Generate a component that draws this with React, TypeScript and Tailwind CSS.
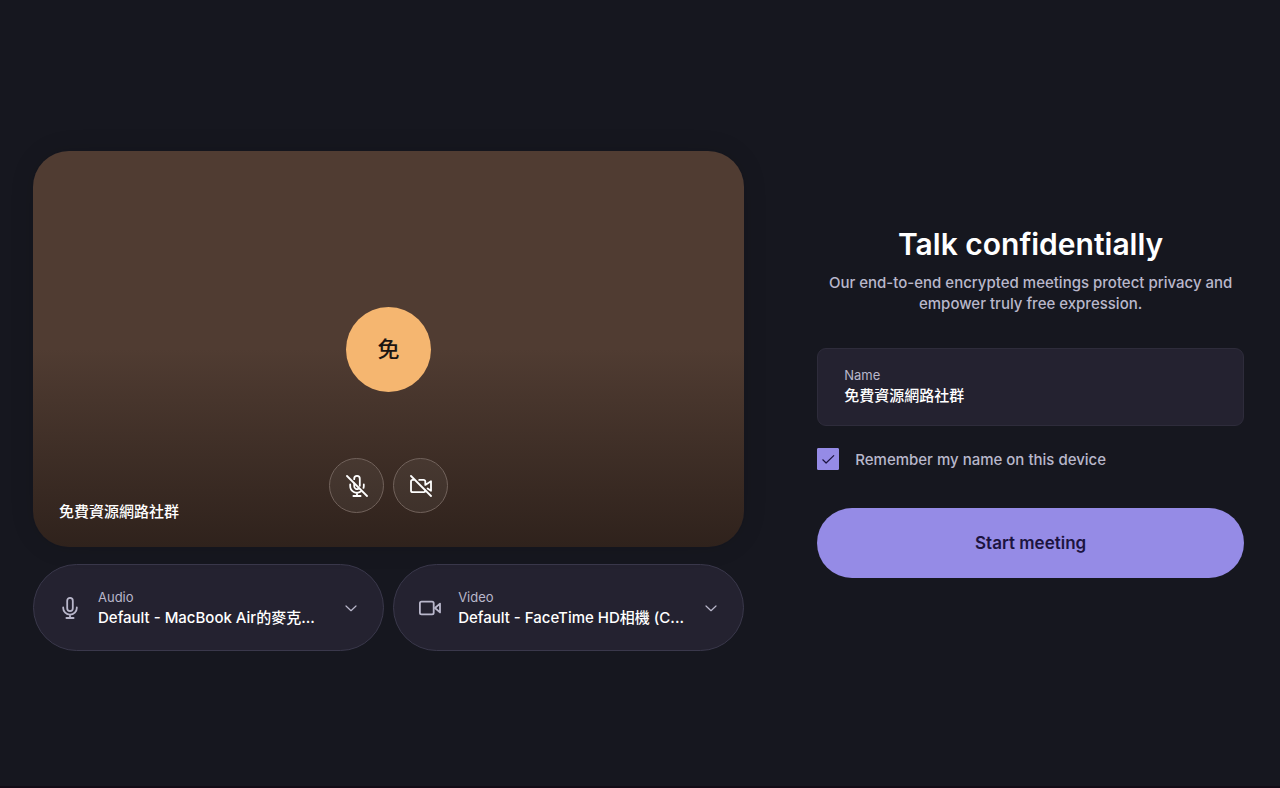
import { useState } from 'react';
import type { ReactNode } from 'react';
import { clsx } from 'clsx';

const USER_NAME = '免費資源網路社群';

export default function App() {
  return (
    <main className="min-h-screen border-b-2 border-[#120c16] bg-[#16171f] pt-4 pr-9 pl-[33px] font-['Inter','Noto_Sans_CJK_TC',sans-serif] text-white grid grid-cols-[5fr_3fr] items-center gap-[73px]">
      <section className="min-w-0">
        <VideoPreview />
        <div className="mt-[17px] grid grid-cols-2 gap-[9px]">
          <DeviceSelect
            id="audio-device"
            label="Audio"
            value="Default - MacBook Air的麥克..."
            icon={<MicIcon />}
          />
          <DeviceSelect
            id="video-device"
            label="Video"
            value="Default - FaceTime HD相機 (C..."
            icon={<CameraIcon />}
          />
        </div>
      </section>
      <JoinForm />
    </main>
  );
}

function VideoPreview() {
  const [isMuted, setIsMuted] = useState<boolean>(true);
  const [isCameraOff, setIsCameraOff] = useState<boolean>(true);

  return (
    <div className="relative flex aspect-[711/396] items-center justify-center rounded-[36px] bg-linear-to-b from-[#503c32] from-50% to-[#2f221c] shadow-[0_0_24px_rgba(0,0,0,0.12)]">
      <div className="flex size-[85px] items-center justify-center rounded-full bg-[#f5b670] text-[22px] font-medium text-[#1c1512]">
        免
      </div>
      <span className="absolute bottom-[23px] left-[26px] text-[15px] leading-6 font-medium">
        {USER_NAME}
      </span>
      <div className="absolute inset-x-0 bottom-[34px] flex justify-center gap-[9px]">
        <RoundButton
          label="Microphone"
          isOff={isMuted}
          onClick={() => setIsMuted(!isMuted)}>
          {isMuted ? <MicOffIcon /> : <MicIcon />}
        </RoundButton>
        <RoundButton
          label="Camera"
          isOff={isCameraOff}
          onClick={() => setIsCameraOff(!isCameraOff)}>
          {isCameraOff ? <CameraOffIcon /> : <CameraIcon />}
        </RoundButton>
      </div>
    </div>
  );
}

function RoundButton({
  label,
  isOff,
  onClick,
  children,
}: {
  label: string;
  isOff: boolean;
  onClick: () => void;
  children: ReactNode;
}) {
  return (
    <button
      type="button"
      aria-label={label}
      aria-pressed={!isOff}
      className={clsx(
        'flex size-[55px] cursor-pointer items-center justify-center rounded-full border border-[#71625b]',
        isOff ? 'bg-white/5' : 'bg-white/20',
      )}
      onClick={onClick}>
      {children}
    </button>
  );
}

function DeviceSelect({
  id,
  label,
  value,
  icon,
}: {
  id: string;
  label: string;
  value: string;
  icon: ReactNode;
}) {
  return (
    <div className="flex h-[87px] items-center rounded-full border border-[#3a384b] bg-[#242230] pr-[26px] pl-[25px] text-[#b9b7cb]">
      {icon}
      <div className="ml-[17px] flex min-w-0 flex-1 flex-col">
        <label htmlFor={id} className="text-[13px] leading-5">
          {label}
        </label>
        <select
          id={id}
          className="h-[22px] appearance-none bg-transparent text-[15px] leading-[22px] font-medium text-white outline-none">
          <option>{value}</option>
        </select>
      </div>
      <svg
        className="ml-3 h-3 w-3 shrink-0"
        viewBox="0 0 12 12"
        fill="none"
        stroke="currentColor"
        strokeWidth="1.2"
        strokeLinecap="round"
        strokeLinejoin="round">
        <path d="M1 4l5 4.7L11 4" />
      </svg>
    </div>
  );
}

function JoinForm() {
  const [name, setName] = useState<string>(USER_NAME);
  const [remember, setRemember] = useState<boolean>(true);

  return (
    <form
      className="flex flex-col pt-1"
      onSubmit={(event) => event.preventDefault()}>
      <h1 className="text-center text-[30px] leading-8 font-semibold">
        Talk confidentially
      </h1>
      <p className="mt-3 text-center text-[15px] leading-[21px] font-medium text-[#b9b7cb]">
        Our end-to-end encrypted meetings protect privacy and empower truly free
        expression.
      </p>
      <div className="mt-[34px] flex h-[78px] flex-col justify-center rounded-[9px] border border-[#2e2c3b] bg-[#242230] px-[26px] pb-0.5">
        <label htmlFor="name" className="text-[13px] leading-5 text-[#b9b7cb]">
          Name
        </label>
        <input
          id="name"
          type="text"
          autoComplete="off"
          className="h-[22px] bg-transparent text-[15px] leading-[22px] font-medium outline-none"
          value={name}
          onChange={(event) => setName(event.target.value)}
        />
      </div>
      <div className="mt-[22px] flex items-center">
        <span className="grid size-[22px]">
          <input
            id="remember"
            type="checkbox"
            className="col-start-1 row-start-1 size-[22px] appearance-none rounded-[1px] border border-[#958be6] checked:bg-[#958be6]"
            checked={remember}
            onChange={(event) => setRemember(event.target.checked)}
          />
          {remember && (
            <svg
              className="pointer-events-none col-start-1 row-start-1 size-[22px]"
              viewBox="0 0 22 22"
              fill="none"
              stroke="#1c1440"
              strokeWidth="1.2"
              strokeLinecap="round"
              strokeLinejoin="round">
              <path d="M5.8 11.8l3.3 3.2 7.6-7.4" />
            </svg>
          )}
        </span>
        <label
          htmlFor="remember"
          className="pl-4 text-[15px] leading-[21px] font-medium text-[#b9b7cb]">
          Remember my name on this device
        </label>
      </div>
      <button
        type="submit"
        className="mt-[38px] h-[70px] cursor-pointer rounded-full bg-[#958be6] pt-0.5 text-[17px] font-semibold text-[#1c1440]">
        Start meeting
      </button>
    </form>
  );
}

function Icon({ children }: { children: ReactNode }) {
  return (
    <svg
      className="size-[22px] shrink-0"
      viewBox="0 0 22 22"
      fill="none"
      stroke="currentColor"
      strokeWidth="1.8"
      strokeLinecap="round"
      strokeLinejoin="round">
      {children}
    </svg>
  );
}

function MicIcon() {
  return (
    <Icon>
      <rect x="8.2" y="0.9" width="5.6" height="13.2" rx="2.8" />
      <path d="M4.2 10.4v.5a6.8 6.8 0 0 0 13.6 0v-.5M11 17.7V21M7.4 21h7.2" />
    </Icon>
  );
}

function MicOffIcon() {
  return (
    <Icon>
      <path d="M1 1l20 20" />
      <path d="M8.2 4.2v-.5a2.8 2.8 0 0 1 5.6 0v7.1M8.2 8.4v2.9a2.8 2.8 0 0 0 4.2 2.4" />
      <path d="M4.2 9.4v1.5a6.8 6.8 0 0 0 10.6 5.7M17.8 9.4v1.5c0 .7-.1 1.3-.3 2M11 17.7V21M7.4 21h7.2" />
    </Icon>
  );
}

function CameraIcon() {
  return (
    <Icon>
      <rect x="0.9" y="4.6" width="13.8" height="12.8" rx="1.6" />
      <path d="M16 11l5-4.4v8.8z" />
    </Icon>
  );
}

function CameraOffIcon() {
  return (
    <Icon>
      <path d="M1 1l20 20" />
      <path d="M3.6 4.9H2.7A1.7 1.7 0 0 0 1 6.6v8.8a1.7 1.7 0 0 0 1.7 1.7h11a1.6 1.6 0 0 0 1.6-1.6" />
      <path d="M9.2 4.9h4.4a1.7 1.7 0 0 1 1.7 1.7v3.3L21 6.2v9.6l-3.4-2.3" />
    </Icon>
  );
}
